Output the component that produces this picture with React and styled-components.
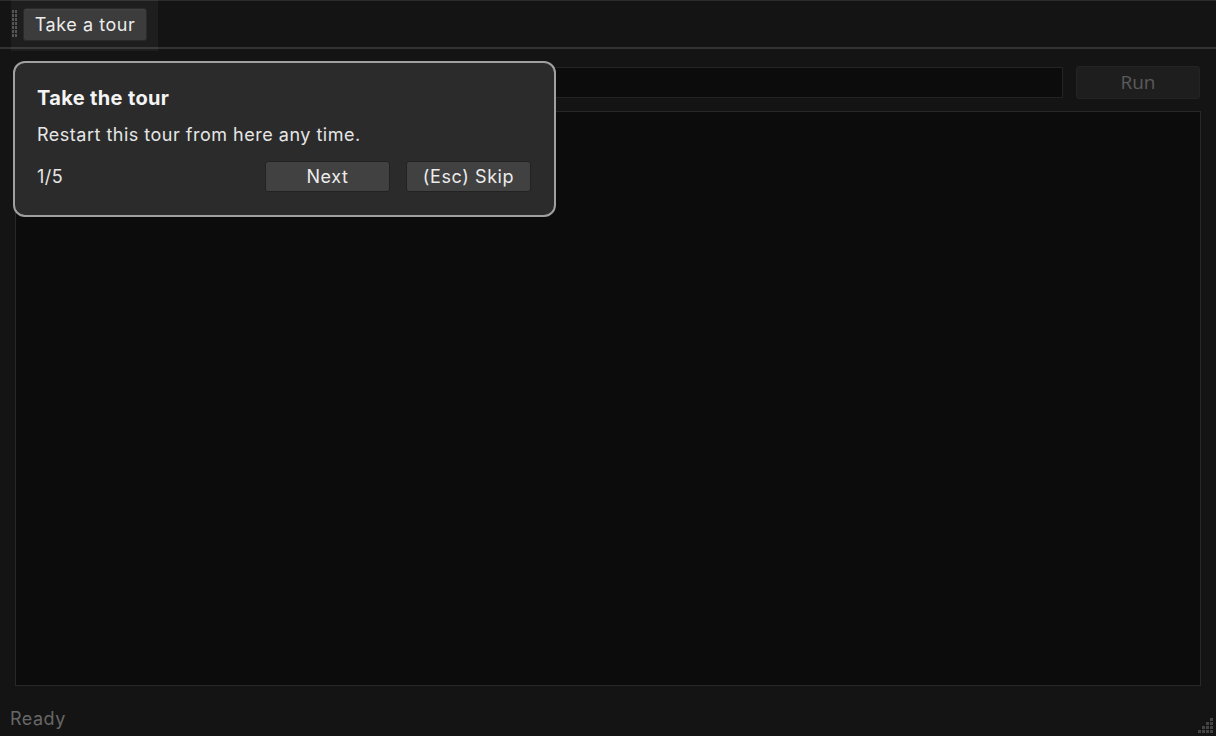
import React from "react";
import styled, { createGlobalStyle } from "styled-components";

const Global = createGlobalStyle`
  html, body { margin: 0; padding: 0; background: #141414; }
  body { font-family: Inter, "Noto Sans", "Liberation Sans", sans-serif; color: #e8e8e8; }
  * { box-sizing: border-box; }
`;

const Page = styled.div`
  position: relative;
  width: 1216px;
  height: 736px;
  display: flex;
  flex-direction: column;
  background: #141414;
  overflow: hidden;
`;

const Toolbar = styled.div`
  height: 49px;
  display: flex;
  align-items: stretch;
  padding-left: 11px;
  border-top: 1px solid #2c2c2c;
  border-bottom: 2px solid #333333;
  flex-shrink: 0;
`;

const ToolGroup = styled.div`
  width: 147px;
  margin: -1px 0 -4px;
  display: flex;
  align-items: center;
  gap: 6px;
  padding: 0 0 3px 1px;
  background: rgba(255, 255, 255, 0.045);
`;

const Grip = styled.div`
  width: 5px;
  height: 27px;
  margin-top: -2px;
  background-image: linear-gradient(#555, #555);
  -webkit-mask: repeating-linear-gradient(to bottom, #000 0 3px, transparent 3px 4px),
    repeating-linear-gradient(to right, #000 0 2px, transparent 2px 3px);
  -webkit-mask-composite: source-in;
  mask-composite: intersect;
`;

const ToolButton = styled.button`
  height: 33px;
  width: 124px;
  margin-top: 1px;
  background: #3c3c3c;
  border: 1px solid #2a2a2a;
  border-radius: 3px;
  color: #ececec;
  font-family: inherit;
  font-size: 18px;
  letter-spacing: 0.55px;
  padding: 0 0 1px;
  box-shadow: inset 0 1px 0 rgba(255, 255, 255, 0.04);
`;

const Content = styled.div`
  flex: 1;
  display: flex;
  flex-direction: column;
  padding: 17px 15px 0 15px;
  gap: 12px;
`;

const InputRow = styled.div`
  display: flex;
  align-items: center;
  gap: 13px;
  height: 33px;
`;

const Input = styled.div`
  flex: 1;
  height: 31px;
  background: #0c0c0c;
  border: 1px solid #232323;
`;

const RunButton = styled.button`
  width: 124px;
  height: 33px;
  margin-right: 1px;
  background: #1e1e1e;
  border: 1px solid #242424;
  border-radius: 3px;
  color: #5a5a5a;
  font-family: "Open Sans", Inter, sans-serif;
  font-size: 19px;
  padding: 0 0 2px;
`;

const Panel = styled.div`
  height: 575px;
  background: #0c0c0c;
  border: 1px solid #282828;
`;

const StatusBar = styled.div`
  height: 50px;
  display: flex;
  align-items: center;
  justify-content: space-between;
  padding: 14px 2px 0 10px;
  flex-shrink: 0;
`;

const StatusText = styled.span`
  color: #676767;
  font-size: 18px;
  letter-spacing: 0.5px;
`;

const ResizeGrip = styled.svg`
  width: 18px;
  height: 18px;
  margin-top: 14px;
`;

const Popup = styled.div`
  position: absolute;
  left: 13px;
  top: 61px;
  width: 543px;
  height: 156px;
  background: #2b2b2b;
  border: 2px solid #a0a0a0;
  border-radius: 12px;
  padding: 23px 23px 0 22px;
  display: flex;
  flex-direction: column;
`;

const PopupTitle = styled.div`
  font-size: 20px;
  font-weight: 700;
  color: #f4f4f4;
  line-height: 24px;
  letter-spacing: 0.35px;
`;

const PopupBody = styled.div`
  margin-top: 14px;
  font-size: 18px;
  color: #e6e6e6;
  line-height: 22px;
  letter-spacing: 0.5px;
`;

const PopupFooter = styled.div`
  margin-top: 15px;
  display: flex;
  align-items: center;
  gap: 16px;
`;

const Counter = styled.span`
  flex: 1;
  font-size: 18px;
  color: #e6e6e6;
  letter-spacing: 0.5px;
`;

const PopupButton = styled.button`
  width: 125px;
  height: 31px;
  background: #414141;
  border: 1px solid #222;
  border-radius: 3px;
  color: #ececec;
  font-family: inherit;
  font-size: 18px;
  letter-spacing: 0.6px;
  padding: 0 0 1px;
`;

export default function App() {
  const dots = [
    [16, 4], [12, 8], [16, 8], [8, 12], [12, 12], [16, 12], [4, 16], [8, 16], [12, 16], [16, 16],
  ];
  return (
    <Page>
      <Global />
      <Toolbar>
        <ToolGroup>
          <Grip />
          <ToolButton>Take a tour</ToolButton>
        </ToolGroup>
      </Toolbar>
      <Content>
        <InputRow>
          <Input />
          <RunButton>Run</RunButton>
        </InputRow>
        <Panel />
      </Content>
      <StatusBar>
        <StatusText>Ready</StatusText>
        <ResizeGrip viewBox="0 0 18 18">
          {dots.map(([x, y], i) => (
            <rect key={i} x={x - 2} y={y - 2} width="3" height="3" fill="#444" />
          ))}
        </ResizeGrip>
      </StatusBar>
      <Popup>
        <PopupTitle>Take the tour</PopupTitle>
        <PopupBody>Restart this tour from here any time.</PopupBody>
        <PopupFooter>
          <Counter>1/5</Counter>
          <PopupButton>Next</PopupButton>
          <PopupButton>(Esc) Skip</PopupButton>
        </PopupFooter>
      </Popup>
    </Page>
  );
}
